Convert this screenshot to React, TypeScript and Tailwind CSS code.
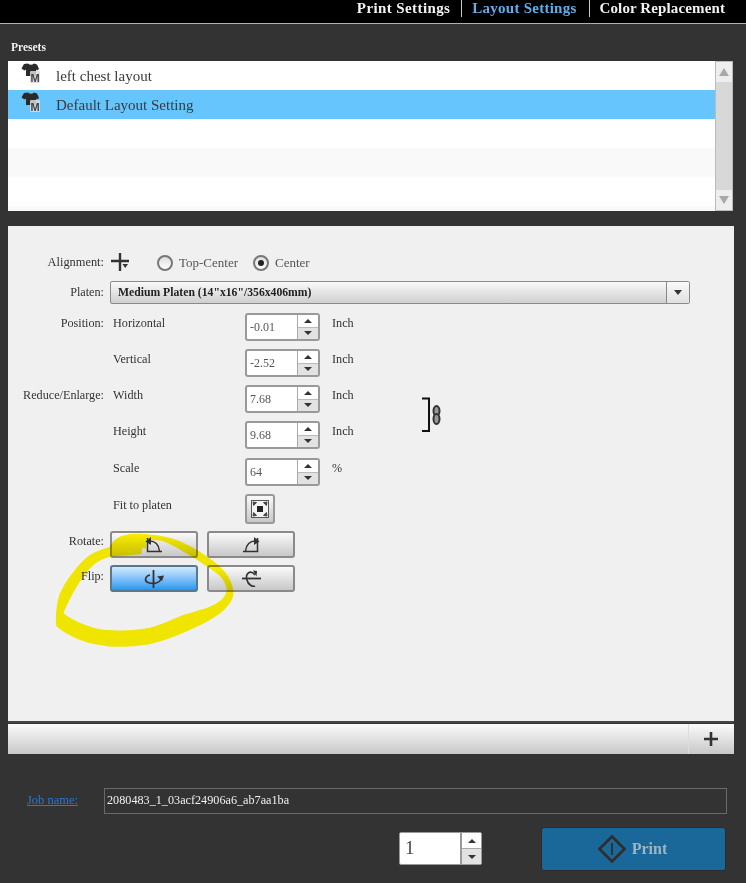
import React from "react";

const serif = "font-['Liberation_Serif',serif]";

function Shirt() {
  return (
    <svg width="22" height="22" viewBox="0 0 22 22" className="shrink-0">
      <path d="M4 1 L8 0.5 Q11 3 14 0.5 L17 1.5 L19 6 L17 7.5 L16 6.5 L16 13 L6 13 L6 6.5 L4.5 7.5 L1.5 5.5 Z" fill="#2a2a2a" />
      <rect x="10" y="8" width="10" height="12" rx="1" fill="#dcdcdc" opacity="0.85" />
      <text x="15" y="18.5" textAnchor="middle" fontSize="11" fontWeight="700" fill="#444" fontFamily="Liberation Sans, sans-serif">M</text>
    </svg>
  );
}

function Row({ name, bg, icon }: { name?: string; bg: string; icon?: boolean }) {
  return (
    <div className={`h-[29px] flex items-center pl-[12px] ${bg}`}>
      {icon && <div className="-mt-[4px] mr-[14px]"><Shirt /></div>}
      {name && <span className="text-[15px] text-[#3a3a3a] pt-[1px]">{name}</span>}
    </div>
  );
}

function Spinner({ value }: { value: string }) {
  return (
    <div className="w-[75px] h-[28px] flex border-2 border-[#999] rounded-[3px] bg-white">
      <div className="w-[50px] flex items-center pl-[3px] text-[12px] text-[#555]">{value}</div>
      <div className="flex-1 flex flex-col border-l border-[#aaa]">
        <div className="flex-1 bg-white flex items-center justify-center">
          <div className="w-0 h-0 border-x-[4px] border-x-transparent border-b-[4px] border-b-[#333]" />
        </div>
        <div className="flex-1 bg-[#e2e2e2] border-t border-[#bbb] flex items-center justify-center">
          <div className="w-0 h-0 border-x-[4px] border-x-transparent border-t-[4px] border-t-[#333]" />
        </div>
      </div>
    </div>
  );
}

function FieldRow({ label, name, value, unit, mt }: { label?: string; name: string; value: string; unit: string; mt: string }) {
  return (
    <div className={`flex h-[28px] ${mt}`}>
      <div className="w-[96px] text-right text-[12.2px] text-[#333] whitespace-nowrap pt-[1px]">{label}</div>
      <div className="w-[141px] pl-[9px] text-[12.2px] text-[#333] pt-[1px]">{name}</div>
      <Spinner value={value} />
      <div className="ml-[12px] text-[12.2px] text-[#333] pt-[1px]">{unit}</div>
    </div>
  );
}

function Btn({ active, children }: { active?: boolean; children: React.ReactNode }) {
  return (
    <div
      className={`w-[88px] h-[27px] rounded-[3px] border-2 flex items-center justify-center ${
        active
          ? "border-[#5d7688] bg-gradient-to-b from-[#cfeafc] to-[#1f96f2]"
          : "border-[#8a8a8a] bg-gradient-to-b from-[#fafafa] to-[#c8c8c8]"
      }`}
    >
      {children}
    </div>
  );
}

export default function App() {
  return (
    <div className={`relative w-[746px] h-[883px] bg-[#333333] overflow-hidden ${serif}`}>
      <div className="h-[24px] bg-black border-b border-[#b0b0b0] flex justify-end items-start pr-[21px] text-[15px] font-bold text-[#f2f2f2]">
        <span className="leading-[17px] tracking-[0.4px]">Print Settings</span>
        <span className="w-px h-[17px] bg-[#ccc] ml-[11px] mr-[10px]" />
        <span className="leading-[17px] tracking-[0.25px] text-[#62ade8]">Layout Settings</span>
        <span className="w-px h-[17px] bg-[#ccc] ml-[12px] mr-[10px]" />
        <span className="leading-[17px] tracking-[0.12px]">Color Replacement</span>
      </div>

      <div className="pl-[11px] pt-[17px] h-[37px] text-[11.5px] text-[#f0f0f0] font-bold leading-[13px]">Presets</div>

      <div className="ml-[8px] w-[725px] h-[150px] flex bg-white">
        <div className="flex-1 overflow-hidden">
          <Row name="left chest layout" bg="bg-white" icon />
          <Row name="Default Layout Setting" bg="bg-[#66c5fc]" icon />
          <Row bg="bg-white" />
          <Row bg="bg-[#f9f9f9]" />
          <Row bg="bg-white" />
          <Row bg="bg-[#f9f9f9]" />
        </div>
        <div className="w-[18px] bg-[#d8d8d8] border border-[#bbb] flex flex-col justify-between">
          <div className="h-[20px] bg-[#eeeeee] flex items-center justify-center">
            <div className="w-0 h-0 border-x-[5px] border-x-transparent border-b-[8px] border-b-[#a8a8a8]" />
          </div>
          <div className="h-[20px] bg-[#eeeeee] flex items-center justify-center">
            <div className="w-0 h-0 border-x-[5px] border-x-transparent border-t-[8px] border-t-[#a8a8a8]" />
          </div>
        </div>
      </div>

      <div className="relative mt-[15px] ml-[8px] w-[726px] h-[497px] bg-[#f0f0f0] border-b-2 border-[#444] pt-[26px]">
        <div className="flex h-[22px] items-center text-[12.4px] text-[#333]">
          <div className="w-[96px] text-right -mt-[2px]">Alignment:</div>
          <svg width="20" height="20" viewBox="0 0 20 20" className="ml-[6px] shrink-0">
            <path d="M10 0V18M1 8H19" stroke="#333" strokeWidth="2.4" fill="none" />
            <path d="M12.5 11H18L15.2 15Z" fill="#333" />
          </svg>
          <div className="ml-[27px] w-[16px] h-[16px] rounded-full border-2 border-[#777] bg-gradient-to-b from-[#ddd] to-white" />
          <span className="ml-[6px] text-[13px] text-[#555]">Top-Center</span>
          <div className="ml-[15px] w-[16px] h-[16px] rounded-full border-2 border-[#777] bg-gradient-to-b from-[#ddd] to-white flex items-center justify-center">
            <div className="w-[6px] h-[6px] rounded-full bg-[#222]" />
          </div>
          <span className="ml-[6px] text-[13px] text-[#555]">Center</span>
        </div>

        <div className="flex h-[23px] mt-[7px]">
          <div className="w-[96px] text-right text-[12.2px] text-[#333] pt-[2px]">Platen:</div>
          <div className="ml-[6px] w-[580px] flex border border-[#8a8a8a] rounded-[2px] bg-gradient-to-b from-[#fafafa] to-[#cfcfcf]">
            <div className="flex-1 pl-[7px] text-[11.7px] font-bold text-[#222] flex items-center">Medium Platen (14"x16"/356x406mm)</div>
            <div className="w-[23px] border-l border-[#888] bg-gradient-to-b from-[#fafafa] to-[#e0e0e0] flex items-center justify-center">
              <div className="w-0 h-0 border-x-[4.5px] border-x-transparent border-t-[5px] border-t-[#333]" />
            </div>
          </div>
        </div>

        <FieldRow label="Position:" name="Horizontal" value="-0.01" unit="Inch" mt="mt-[9px]" />
        <FieldRow name="Vertical" value="-2.52" unit="Inch" mt="mt-[8px]" />
        <FieldRow label="Reduce/Enlarge:" name="Width" value="7.68" unit="Inch" mt="mt-[8px]" />
        <FieldRow name="Height" value="9.68" unit="Inch" mt="mt-[8px]" />
        <FieldRow name="Scale" value="64" unit="%" mt="mt-[9px]" />

        <div className="flex h-[30px] mt-[8px]">
          <div className="w-[96px]" />
          <div className="w-[141px] pl-[9px] text-[12.2px] text-[#333] pt-[2px]">Fit to platen</div>
          <div className="w-[30px] h-[30px] border-2 border-[#999] rounded-[3px] bg-gradient-to-b from-[#fafafa] to-[#c8c8c8] flex items-center justify-center">
            <svg width="18" height="18" viewBox="0 0 18 18">
              <rect x="0.5" y="0.5" width="17" height="17" fill="#f4f4f4" stroke="#555" />
              <rect x="6" y="6" width="6" height="6" fill="#222" />
              <path d="M2 2L5.5 2.6L2.6 5.5ZM16 2L12.5 2.6L15.4 5.5ZM2 16L2.6 12.5L5.5 15.4ZM16 16L15.4 12.5L12.5 15.4Z" fill="#444" stroke="#444" />
            </svg>
          </div>
        </div>

        <div className="flex mt-[7px] h-[27px]">
          <div className="w-[96px] text-right text-[12.2px] text-[#333] pt-[1px]">Rotate:</div>
          <div className="ml-[6px]">
            <Btn>
              <svg width="18" height="17" viewBox="0 0 18 17">
                <path d="M2.5 2V15.5H17" stroke="#333" strokeWidth="1.5" fill="none" />
                <path d="M4 5C10 4.5 14 9 14.5 15" stroke="#333" strokeWidth="1.5" fill="none" />
                <path d="M0.5 5.5L6 1V9Z" fill="#333" />
              </svg>
            </Btn>
          </div>
          <div className="ml-[9px]">
            <Btn>
              <svg width="18" height="17" viewBox="0 0 18 17">
                <path d="M15.5 2V15.5H1" stroke="#333" strokeWidth="1.5" fill="none" />
                <path d="M14 5C8 4.5 4 9 3.5 15" stroke="#333" strokeWidth="1.5" fill="none" />
                <path d="M17.5 5.5L12 1V9Z" fill="#333" />
              </svg>
            </Btn>
          </div>
        </div>

        <div className="flex mt-[7px] h-[27px]">
          <div className="w-[96px] text-right text-[12.2px] text-[#333] pt-[2px]">Flip:</div>
          <div className="ml-[6px]">
            <Btn active>
              <svg width="20" height="18" viewBox="0 0 20 18">
                <path d="M9.5 0V18" stroke="#333" strokeWidth="1.8" fill="none" />
                <path d="M6 5C1 6 0 11 4 12.5C8 14 15 14 17 9" stroke="#333" strokeWidth="1.6" fill="none" />
                <path d="M13 6.5L20 5.5L18 11Z" fill="#333" />
              </svg>
            </Btn>
          </div>
          <div className="ml-[9px]">
            <Btn>
              <svg width="19" height="19" viewBox="0 0 19 19">
                <path d="M0 9.5H19" stroke="#333" strokeWidth="1.8" fill="none" />
                <path d="M13 6C8 0 3 5 5 11C6 16 11 18 13 17" stroke="#333" strokeWidth="1.6" fill="none" />
                <path d="M11 1.5L15 2L14.5 7.5Z" fill="#333" />
              </svg>
            </Btn>
          </div>
        </div>

        <svg width="24" height="36" viewBox="0 0 24 36" className="absolute left-[413px] top-[171px]">
          <path d="M1 1.5H8V34H1" stroke="#111" strokeWidth="2" fill="none" />
          <ellipse cx="15.5" cy="14" rx="3" ry="5" fill="#999" stroke="#333" strokeWidth="2" />
          <ellipse cx="15.5" cy="22" rx="3" ry="5" fill="#999" stroke="#333" strokeWidth="2" />
        </svg>
      </div>

      <div className="mt-[1px] ml-[8px] w-[726px] h-[30px] bg-gradient-to-b from-[#fbfbfb] to-[#c8c8c8] flex justify-end">
        <div className="w-[46px] border-l border-[#ddd] flex items-center justify-center pr-[2px]">
          <svg width="14" height="14" viewBox="0 0 14 14">
            <path d="M7 0V14M0 7H14" stroke="#333" strokeWidth="2.6" />
          </svg>
        </div>
      </div>

      <div className="flex items-center mt-[33px] h-[27px]">
        <a className="ml-[27px] w-[77px] text-[12.5px] text-[#2a78d0] underline">Job name:</a>
        <div className="w-[623px] h-[26px] border border-[#6a6a6a] flex items-center pl-[2px] text-[12.2px] text-[#f0f0f0]">
          2080483_1_03acf24906a6_ab7aa1ba
        </div>
      </div>

      <div className="flex items-start mt-[13px]">
        <div className="ml-[399px] mt-[5px] w-[83px] h-[33px] flex border border-[#999] rounded-[2px] bg-white">
          <div className="w-[60px] flex items-center pl-[5px] text-[19px] text-[#444]">1</div>
          <div className="flex-1 flex flex-col border-l-2 border-[#999]">
            <div className="flex-1 bg-white flex items-center justify-center">
              <div className="w-0 h-0 border-x-[4px] border-x-transparent border-b-[4px] border-b-[#333]" />
            </div>
            <div className="flex-1 bg-[#e2e2e2] border-t border-[#aaa] flex items-center justify-center">
              <div className="w-0 h-0 border-x-[4px] border-x-transparent border-t-[4px] border-t-[#333]" />
            </div>
          </div>
        </div>
        <div className="ml-[59px] w-[185px] h-[44px] rounded-[3px] bg-[#1a6899] border border-[#2b2b2b] flex items-center justify-center">
          <svg width="28" height="28" viewBox="0 0 28 28" className="shrink-0 -ml-[2px]">
            <path d="M14 1.5L26.5 14L14 26.5L1.5 14Z" fill="none" stroke="#2e2e2e" strokeWidth="2.8" />
            <path d="M14 8V20" stroke="#2e2e2e" strokeWidth="1.8" />
          </svg>
          <span className="ml-[6px] text-[16px] font-bold text-[#9fb5c4]">Print</span>
        </div>
      </div>

      <svg
        width="190"
        height="120"
        viewBox="0 0 570 360"
        className="absolute left-[50px] top-[530px] mix-blend-multiply pointer-events-none"
      >
        <path
          fillRule="evenodd"
          fill="#fff400"
          d="M180 50 C188 35 200 18 240 12 C280 9 340 15 380 30 C420 45 470 75 510 110 C535 132 552 165 550 195 C545 225 510 255 470 275 C430 295 370 325 310 340 C270 350 190 355 150 345 C100 338 50 315 20 290 C14 270 20 215 30 190 C45 155 85 100 120 75 C140 62 165 55 180 50 Z
             M40 250 C65 270 115 292 150 298 C190 304 270 302 310 290 C340 282 380 262 400 255 C430 245 465 238 490 225 C515 212 532 195 530 175 C525 155 515 142 500 130 C485 118 465 105 450 95 C430 82 415 72 400 65 C380 52 360 40 335 32 L288 28 L288 55 L275 55 L275 72 L180 80 C160 85 145 93 130 105 C110 125 95 145 80 170 C65 195 50 225 40 250 Z"
        />
      </svg>
    </div>
  );
}
